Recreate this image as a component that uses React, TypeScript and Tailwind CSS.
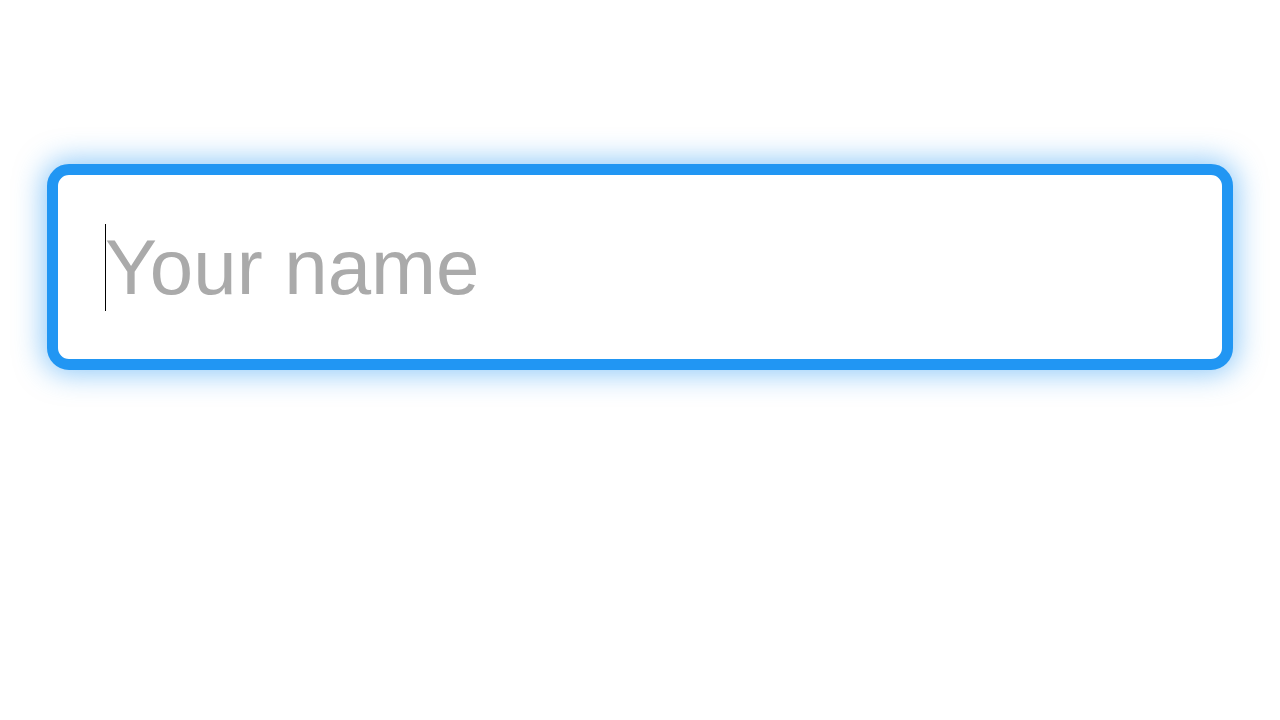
const NameInput = () => {
    return (
        <div className="relative rounded-[22px] border-[11px] border-[#2196f3] bg-white shadow-[0_0_28px_4px_rgba(33,150,243,0.5)]">
            <input
                type="text"
                placeholder="Your name"
                className="block h-[184px] w-full rounded-[11px] bg-transparent px-[47px] text-[78px] text-black caret-transparent outline-none placeholder:text-[#aaaaaa]"
                style={{ fontFamily: '"Liberation Sans", Arial, sans-serif' }}
            />
            {/* fake caret, the headless browser does not draw one */}
            <span className="pointer-events-none absolute left-[47px] top-[49px] h-[87px] w-px bg-black" />
        </div>
    );
};

export default function App() {
    return (
        <div className="min-h-screen bg-white px-[47px] pt-[164px]">
            <NameInput />
        </div>
    );
}
